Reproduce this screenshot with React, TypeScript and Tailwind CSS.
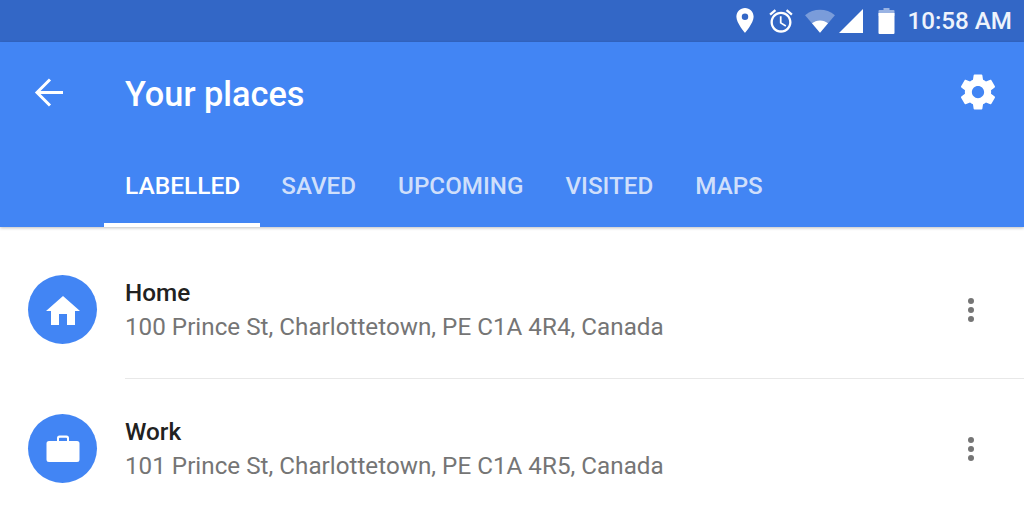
import React from 'react';

const tabs = ['SAVED', 'UPCOMING', 'VISITED', 'MAPS'];

function StatusBar() {
  return (
    <div className="h-[42px] bg-[#3367c6] flex items-center justify-end pr-[12px] text-white">
      <svg className="w-[20px] h-[28px] mr-[12px]" viewBox="0 0 18 26">
        <path fill="#fff" fillRule="evenodd" d="M9 1C4.6 1 1 4.6 1 9c0 5.8 8 15 8 15s8-9.2 8-15c0-4.400-3.600-8-8-8zm0 11a3 3 0 1 1 0-6 3 3 0 0 1 0 6z" />
      </svg>
      <svg className="w-[28px] h-[28px] mr-[9px]" viewBox="0 0 24 24">
        <path fill="#fff" d="M22 5.720l-4.600-3.860-1.290 1.530 4.600 3.860L22 5.720zM7.880 3.390L6.600 1.860 2 5.710l1.290 1.530 4.590-3.850zM12.500 8H11v6l4.750 2.850.75-1.230-4-2.370V8zM12 4c-4.970 0-9 4.030-9 9s4.020 9 9 9c4.970 0 9-4.030 9-9s-4.030-9-9-9zm0 16c-3.870 0-7-3.130-7-7s3.130-7 7-7 7 3.130 7 7-3.130 7-7 7z" />
      </svg>
      <svg className="w-[32px] h-[26px] mr-[2px]" viewBox="0 0 30 24">
        <path fill="#fff" fillOpacity="0.35" d="M15 23L1 6.500C5 3 10 1.500 15 1.500S25 3 29 6.500L15 23z" />
        <path fill="#fff" d="M15 23l-7.500-8.800C9.500 12.500 12 11.500 15 11.500s5.500 1 7.500 2.700L15 23z" />
      </svg>
      <svg className="w-[26px] h-[26px] mr-[14px]" viewBox="0 0 26 26">
        <path fill="#fff" d="M1 25L25 1v24H1z" />
      </svg>
      <svg className="w-[17px] h-[26px] mr-[12px]" viewBox="0 0 17 26">
        <path fill="#fff" fillOpacity="0.5" d="M5.500 0h6v2h4a1 1 0 0 1 1 1v5H.5V3a1 1 0 0 1 1-1h4V0z" />
        <path fill="#fff" d="M.5 5h16v20a1 1 0 0 1-1 1h-14a1 1 0 0 1-1-1V5z" />
      </svg>
      <span className="text-[24.200px] leading-none font-medium text-[#eef3fc]">10:58 AM</span>
    </div>
  );
}

function Header() {
  return (
    <div className="bg-[#4285f4] h-[185px] flex flex-col shadow-[0_1px_3px_rgba(0,0,0,0.25)] relative">
      <div className="h-[104px] flex items-center pl-[33px] pr-[25px] pb-[4px]">
        <svg className="w-[30px] h-[30px]" viewBox="0 0 30 30" fill="none" stroke="#fff" strokeWidth="3">
          <path d="M30 15.500H5M17 2.500 4 15.500 17 28.500" />
        </svg>
        <div className="ml-[62px] flex-1 pt-[5px] text-[34.300px] leading-none font-medium text-white">Your places</div>
        <svg className="w-[42px] h-[42px]" viewBox="0 0 24 24">
          <path fill="#fff" d="M19.430 12.980c.04-.32.07-.64.07-.98s-.03-.66-.07-.98l2.110-1.650c.19-.15.24-.42.12-.64l-2-3.460c-.12-.22-.39-.3-.61-.22l-2.490 1c-.52-.4-1.080-.73-1.690-.98l-.38-2.650C14.460 2.180 14.250 2 14 2h-4c-.25 0-.46.18-.49.42l-.38 2.650c-.61.25-1.170.59-1.690.98l-2.490-1c-.23-.09-.49 0-.61.22l-2 3.460c-.13.22-.07.49.12.64l2.110 1.650c-.04.32-.07.65-.07.98s.03.66.07.98l-2.110 1.650c-.19.15-.24.42-.12.64l2 3.460c.12.22.39.3.61.22l2.490-1c.52.4 1.080.73 1.690.98l.38 2.650c.03.24.24.42.49.42h4c.25 0 .46-.18.49-.42l.38-2.650c.61-.25 1.170-.59 1.690-.98l2.490 1c.23.09.49 0 .61-.22l2-3.460c.12-.22.07-.49-.12-.64l-2.110-1.650zM12 15.500c-1.930 0-3.500-1.570-3.500-3.500s1.570-3.500 3.500-3.500 3.500 1.570 3.500 3.500-1.570 3.500-3.500 3.500z" />
        </svg>
      </div>
      <div className="flex pl-[104px] h-[81px]">
        <div className="pl-[21px] pr-[20px] flex items-center pt-[4px] text-[24.500px] leading-none font-medium text-white border-b-[4px] border-white">
          LABELLED
        </div>
        {tabs.map((t) => (
          <div
            key={t}
            className="px-[21px] flex items-center pt-[4px] text-[24.200px] leading-none font-medium text-[#cfdffb] border-b-[4px] border-transparent"
          >
            {t}
          </div>
        ))}
      </div>
    </div>
  );
}

function Dots() {
  return (
    <div className="flex flex-col gap-[3px] mr-[50px] ml-auto">
      <div className="w-[6px] h-[6px] rounded-full bg-[#757575]" />
      <div className="w-[6px] h-[6px] rounded-full bg-[#757575]" />
      <div className="w-[6px] h-[6px] rounded-full bg-[#757575]" />
    </div>
  );
}

function PlaceRow({ title, address, icon, height }: { title: string; address: string; icon: React.ReactNode; height: string }) {
  return (
    <div className={`${height} flex items-center pl-[28px]`}>
      <div className="w-[69px] h-[69px] rounded-full bg-[#4285f4] flex items-center justify-center shrink-0">{icon}</div>
      <div className="ml-[28px] pt-[3px]">
        <div className="text-[24.300px] leading-[33px] font-medium text-[#212121]">{title}</div>
        <div className="text-[24.200px] tracking-[0.02px] leading-[37px] text-[#757575]">{address}</div>
      </div>
      <Dots />
    </div>
  );
}

export default function App() {
  return (
    <div className="w-[1024px] h-[514px] bg-white overflow-hidden font-['Roboto',sans-serif]">
      <StatusBar />
      <Header />
      <div className="pt-[14px]">
        <PlaceRow
          height="h-[137px]"
          title="Home"
          address="100 Prince St, Charlottetown, PE C1A 4R4, Canada"
          icon={
            <svg className="w-[36px] h-[32px]" viewBox="0 0 36 32">
              <path fill="#fff" d="M18 2 1 17h5v14h8V20h8v11h8V17h5L18 2z" />
            </svg>
          }
        />
        <div className="h-[1px] bg-[#e8e8e8] ml-[125px]" />
        <PlaceRow
          height="h-[139px]"
          title="Work"
          address="101 Prince St, Charlottetown, PE C1A 4R5, Canada"
          icon={
            <svg className="w-[34px] h-[28px]" viewBox="0 0 34 28">
              <path fill="#fff" fillRule="evenodd" d="M11 6V3a2.500 2.500 0 0 1 2.500-2.500h7A2.500 2.500 0 0 1 23 3v3h8a2.500 2.500 0 0 1 2.500 2.500v16a2.500 2.500 0 0 1-2.500 2.500H3a2.500 2.500 0 0 1-2.500-2.500v-16A2.500 2.500 0 0 1 3 6h8zm2 0h8V3.500a.8.8 0 0 0-.8-.8h-6.400a.8.8 0 0 0-.8.8V6z" />
            </svg>
          }
        />
      </div>
    </div>
  );
}
